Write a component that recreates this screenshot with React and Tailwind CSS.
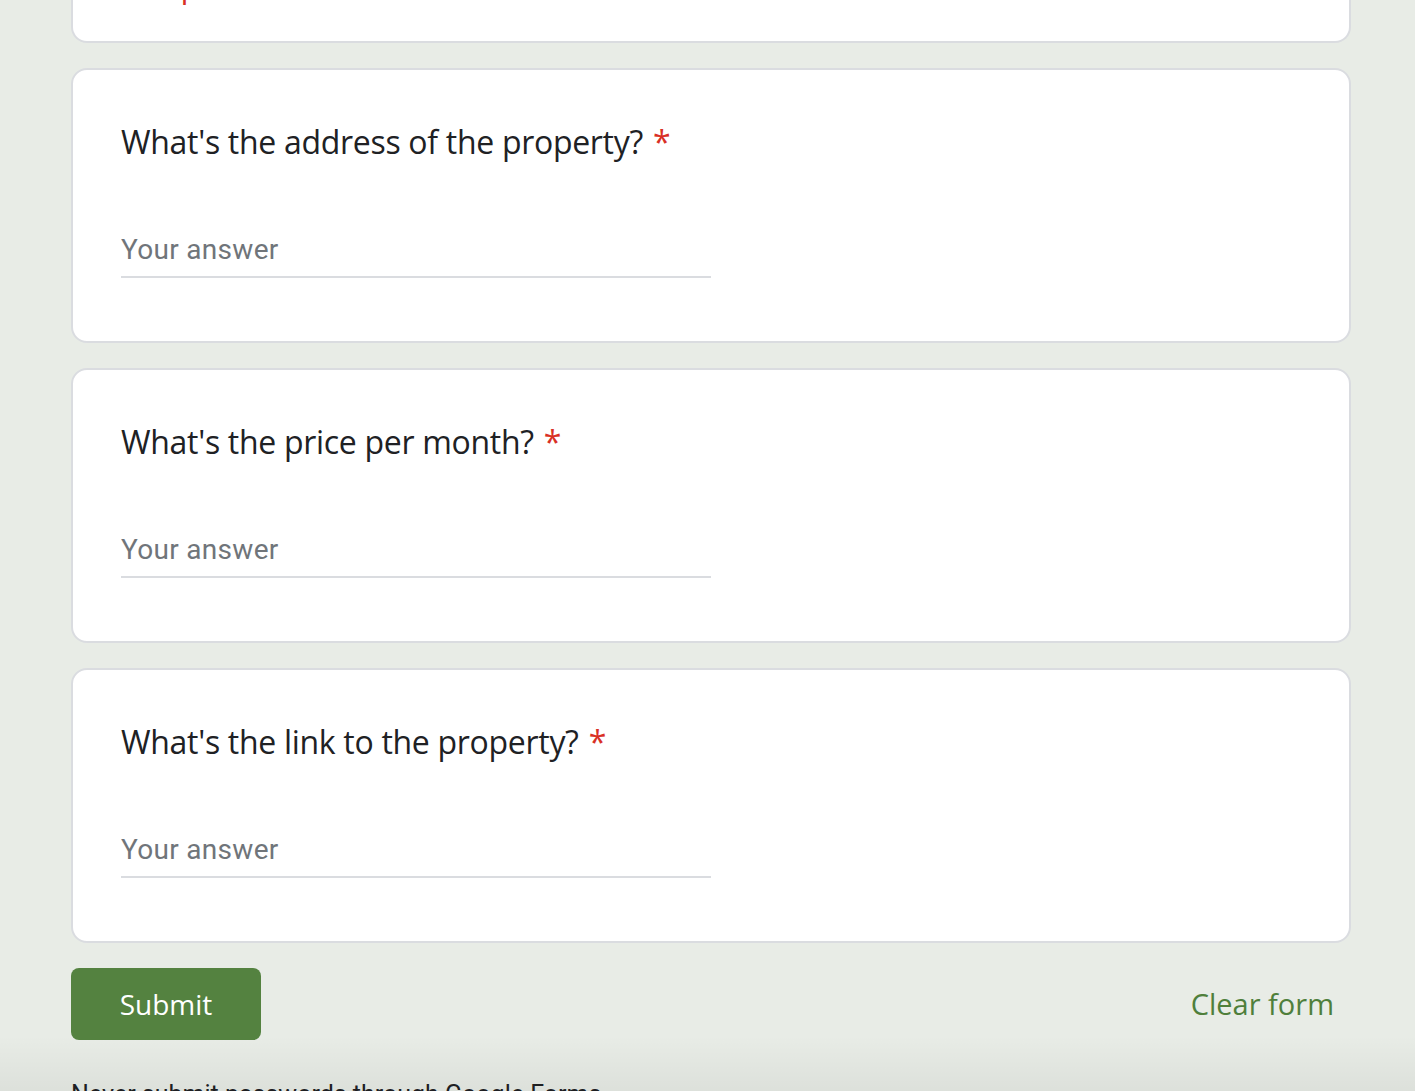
import { useState } from 'react';

const questions = [
  { id: 'address', label: "What's the address of the property?" },
  { id: 'price', label: "What's the price per month?" },
  { id: 'link', label: "What's the link to the property?" },
];

const QuestionCard = ({ label, value, onChange }) => (
  <div className="bg-white border-2 border-[#dadce0] rounded-2xl pl-[48px] pr-[48px] pt-[48px] pb-[63px]">
    <div className="font-['Open_Sans',sans-serif] text-[32px] leading-[48px] text-[#202124] tracking-[-0.3px]">
      {label}
      <span className="text-[#d93025] ml-[10px]">*</span>
    </div>
    <div className="mt-[64px] w-[590px] border-b-2 border-[#dadce0]">
      <input
        value={value}
        onChange={(e) => onChange(e.target.value)}
        placeholder="Your answer"
        className="w-full h-[40px] mb-[6px] bg-transparent outline-none font-['Roboto',sans-serif] text-[28px] text-[#202124] placeholder:text-[#70757a] tracking-[0.3px]"
      />
    </div>
  </div>
);

export default function App() {
  const [answers, setAnswers] = useState({});

  return (
    <div className="min-h-screen bg-[#e8ece6] overflow-hidden h-[1091px] relative">
      <main className="w-[1280px] ml-[71px] flex flex-col gap-[25px]">
        {/* header card, mostly scrolled out of view */}
        <div className="bg-white border-2 border-[#dadce0] border-t-0 rounded-b-2xl pl-[48px] pb-[31px] mt-[-30px] pt-0">
          <div className="font-['Roboto',sans-serif] text-[28px] leading-[40px] text-[#d93025]">* Required</div>
        </div>

        {questions.map((q) => (
          <QuestionCard
            key={q.id}
            label={q.label}
            value={answers[q.id] || ''}
            onChange={(v) => setAnswers({ ...answers, [q.id]: v })}
          />
        ))}

        <div className="flex items-center justify-between">
          <button className="w-[190px] h-[72px] rounded-lg bg-[#548240] text-white font-['Open_Sans',sans-serif] text-[28px] font-medium">
            Submit
          </button>
          <button
            onClick={() => setAnswers({})}
            className="mr-[17px] font-['Open_Sans',sans-serif] text-[29px] font-medium text-[#4f7f3b]"
          >
            Clear form
          </button>
        </div>

        <p className="mt-[14px] font-['Roboto',sans-serif] text-[25px] leading-[32px] text-[#202124]">
          Never submit passwords through Google Forms.
        </p>
      </main>

      {/* soft shade along the bottom edge */}
      <div className="absolute left-0 right-0 bottom-0 h-[55px] bg-gradient-to-b from-transparent to-black/[0.05] pointer-events-none" />
    </div>
  );
}
